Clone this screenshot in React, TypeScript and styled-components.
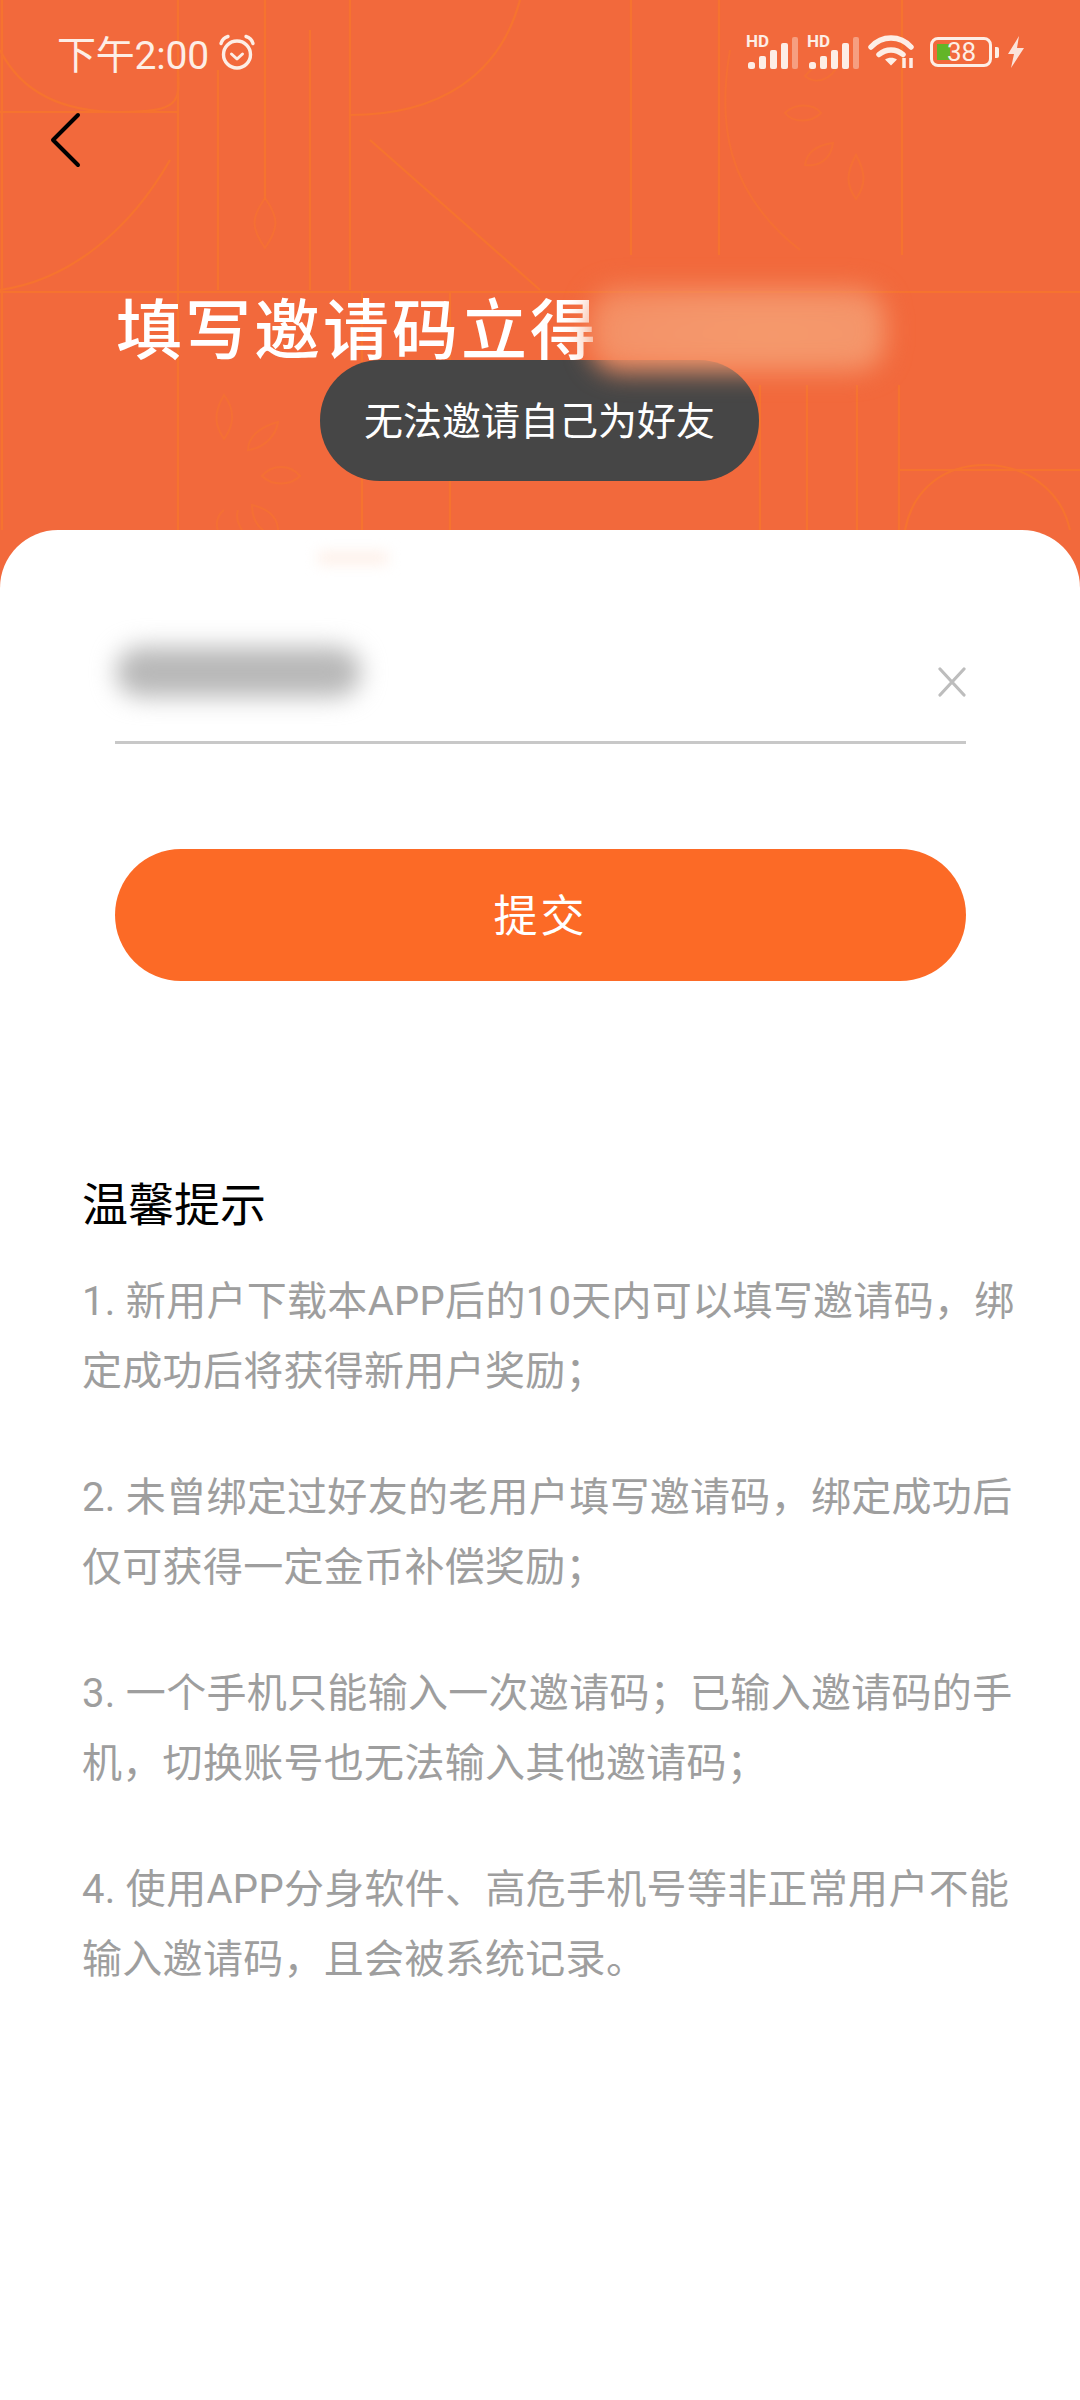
import React from 'react'
import styled, { createGlobalStyle } from 'styled-components'

const GlobalStyle = createGlobalStyle`
  html, body {
    margin: 0;
    padding: 0;
    background: #fff;
  }
  * {
    box-sizing: border-box;
  }
`

const FONT = '"Roboto", "Noto Sans CJK SC", "Noto Sans", sans-serif'

const Page = styled.div`
  position: relative;
  width: 1080px;
  height: 2400px;
  overflow: hidden;
  background: #f2693c;
  font-family: ${FONT};
`

const Pattern = styled.svg`
  position: absolute;
  top: 0;
  left: 0;
`

const Header = styled.header`
  position: relative;
  height: 530px;
  padding: 0 0 0 50px;
`

const StatusBar = styled.div`
  display: flex;
  align-items: center;
  justify-content: space-between;
  height: 104px;
  padding: 0 55px 0 7px;
  color: #fdeee6;
`

const Clock = styled.div`
  display: flex;
  align-items: center;
  gap: 9px;
  font-size: 39px;
  letter-spacing: -0.2px;
`

const StatusIcons = styled.div`
  display: flex;
  align-items: center;
`

const SignalGroup = styled.div`
  position: relative;
  width: 61px;
  height: 34px;
`

const HdLabel = styled.span`
  position: absolute;
  top: -2px;
  left: 0;
  font-size: 17px;
  line-height: 16px;
  font-weight: 700;
  color: #fdeee6;
`

const Battery = styled.div`
  position: relative;
  width: 62px;
  height: 30px;
  margin-left: 14px;
  border: 3px solid #fdeee6;
  border-radius: 8px;
  padding: 4px;
`

const BatteryFill = styled.div`
  width: 13px;
  height: 100%;
  background: #63b527;
`

const BatteryText = styled.span`
  position: absolute;
  top: -3px;
  left: 14px;
  font-size: 26px;
  line-height: 30px;
  color: #fdeee6;
`

const BatteryCap = styled.div`
  width: 4px;
  height: 11px;
  margin: 0 8px 0 3px;
  border-radius: 0 2px 2px 0;
  background: #fdeee6;
`

const BackButton = styled.button`
  display: block;
  width: 40px;
  height: 60px;
  margin: 8px 0 0;
  padding: 0;
  border: 0;
  background: none;
`

const Title = styled.h1`
  margin: 122px 0 0 66px;
  font-size: 66px;
  line-height: 76px;
  font-weight: 500;
  letter-spacing: 3px;
  color: #fff;
  white-space: nowrap;
`

const BlurPatch = styled.div`
  position: absolute;
  top: 288px;
  left: 590px;
  width: 295px;
  height: 84px;
  border-radius: 30px;
  background: radial-gradient(ellipse at 62% 55%, #f59a6c 0%, #f4946a 55%, #f3865a 100%);
  filter: blur(13px);
  z-index: 3;
`

const Toast = styled.div`
  position: absolute;
  top: 360px;
  left: 320px;
  display: flex;
  align-items: center;
  justify-content: center;
  width: 439px;
  height: 121px;
  padding-bottom: 6px;
  border-radius: 60px;
  background: #464646;
  color: #fff;
  font-size: 39px;
  z-index: 2;
`

const Card = styled.main`
  position: relative;
  height: 1870px;
  padding: 0 81px 0 82px;
  border-radius: 58px 58px 0 0;
  background: #fff;
`

const Smudge = styled.div`
  position: absolute;
  top: 22px;
  left: 318px;
  width: 70px;
  height: 12px;
  background: #feefe7;
  filter: blur(7px);
`

const Form = styled.div`
  padding: 0 33px;
`

const InputRow = styled.div`
  position: relative;
  display: flex;
  align-items: center;
  justify-content: flex-end;
  height: 214px;
  padding: 93px 0 0;
  border-bottom: 3px solid #c8c8c8;
`

const BlurredCode = styled.div`
  position: absolute;
  top: 117px;
  left: 1px;
  width: 245px;
  height: 50px;
  border-radius: 25px;
  background: #b8b8b8;
  filter: blur(12px);
`

const ClearButton = styled.button`
  width: 28px;
  height: 30px;
  padding: 0;
  border: 0;
  background: none;
`

const SubmitButton = styled.button`
  display: block;
  width: 100%;
  height: 132px;
  margin-top: 105px;
  padding: 0 0 5px;
  border: 0;
  border-radius: 66px;
  background: #fc6a26;
  color: #fff;
  font-family: ${FONT};
  font-size: 44px;
  letter-spacing: 3px;
`

const TipsTitle = styled.h2`
  margin: 194px 0 0;
  font-size: 46px;
  line-height: 60px;
  font-weight: 400;
  color: #000;
`

const TipsList = styled.div`
  margin-top: 32px;
`

const Tip = styled.p`
  margin: 0 0 56px;
  width: 940px;
  font-size: 40px;
  line-height: 70px;
  letter-spacing: 0.3px;
  color: #9e9e9e;
`

const AlarmIcon = () => (
  <svg width="38" height="38" viewBox="0 0 38 38" fill="none" stroke="#fdeee6" strokeWidth="3.4">
    <circle cx="19" cy="21.5" r="13.5" />
    <path d="M13.5 21l5.5 5 5.500-5" strokeWidth="3" strokeLinecap="round" strokeLinejoin="round" />
    <path d="M3 10.5c1-3.5 3.5-6 7-7M35 10.5c-1-3.500-3.500-6-7-7" strokeLinecap="round" />
  </svg>
)

const SignalIcon = () => (
  <svg width="50" height="32" viewBox="0 0 50 32" style={{ position: 'absolute', left: 2, bottom: 0 }}>
    <rect x="0" y="25" width="7" height="7" rx="2.500" fill="#fdeee6" />
    <rect x="11" y="19" width="7" height="13" rx="2" fill="#fdeee6" />
    <rect x="22" y="13" width="7" height="19" rx="2" fill="#fdeee6" />
    <rect x="33" y="6" width="7" height="26" rx="2" fill="#fdeee6" />
    <rect x="44" y="0" width="6" height="32" rx="2" fill="#fdeee6" opacity="0.4" />
  </svg>
)

const WifiIcon = () => (
  <svg width="48" height="36" viewBox="0 0 48 36" fill="none" stroke="#fdeee6" strokeWidth="5.5" strokeLinecap="round">
    <path d="M3 13C14 1 32 1 43 13" />
    <path d="M11 20.500c7-6 17-6 24 0" />
    <path d="M17 25.500l6 6 6-6c-3.500-2.500-8.500-2.500-12 0z" fill="#fdeee6" stroke="none" />
    <path d="M36 24v10M43 24v10" strokeWidth="3.500" strokeLinecap="butt" />
  </svg>
)

const BoltIcon = () => (
  <svg width="18" height="32" viewBox="0 0 18 32" fill="#fbe3da">
    <path d="M12 0L1 18h6l-3 14L17 12h-7z" />
  </svg>
)

const BackIcon = () => (
  <svg width="40" height="60" viewBox="0 0 40 60" fill="none" stroke="#000" strokeWidth="4" strokeLinecap="round" strokeLinejoin="round">
    <path d="M28 3L3 28L28 53" />
  </svg>
)

const CloseIcon = () => (
  <svg width="28" height="30" viewBox="0 0 28 30" stroke="#bdbdbd" strokeWidth="3.200" strokeLinecap="round">
    <path d="M2 2l24 26M26 2L2 28" />
  </svg>
)

const HeaderPattern = () => (
  <Pattern width="1080" height="530" viewBox="0 0 1080 530" fill="none" stroke="#f6732f" strokeWidth="2.200">
    <path d="M2 0v530M178 0v530M218 70v220M265 0v200M310 30v260M350 0v290M0 112h178M0 292h1080" />
    <path d="M631 0v255M719 0v255M902 0v255M760 385v145M807 385v145M857 385v145M899 385v145M362 292v238M450 292v238" />
    <path d="M900 470h180M905 530c8-42 40-65 80-65s76 24 85 65" />
    <path d="M0 50c20 40 60 62 120 62s60-10 58-42" />
    <path d="M350 115c90 0 150-40 170-115" />
    <path d="M0 290c70-10 130-60 170-130" />
    <path d="M370 140l170 150" />
    <g strokeWidth="2" opacity="0.6">
      <path d="M730 50c-12 70-6 140 70 200" />
      <path d="M265 198c-14 20-14 30 0 50c14-20 14-30 0-50z" />
      <path d="M224 395c-12 20-8 32 0 44c10-14 12-28 0-44z" />
      <path d="M248 450c0-14 14-24 30-28c-2 14-14 26-30 28z" />
      <path d="M262 476c10-12 28-12 38 0c-10 10-28 10-38 0z" />
      <path d="M252 505c18 4 28 14 26 32c-16-4-26-14-26-32z" />
      <path d="M224 510c-8 6-8 16-6 20M238 510c-2 6 0 14 4 20" />
      <path d="M805 76c12-14 24-18 34-18c0 16-20 30-34 18z" />
      <path d="M785 113c10-10 28-10 36 0c-10 10-28 10-36 0z" />
      <path d="M805 165c2-14 12-20 28-22c-2 16-14 24-28 22z" />
      <path d="M856 155c-10 18-10 30 0 44c10-14 10-26 0-44z" />
    </g>
  </Pattern>
)

const TIPS = [
  '1. 新用户下载本APP后的10天内可以填写邀请码，绑定成功后将获得新用户奖励；',
  '2. 未曾绑定过好友的老用户填写邀请码，绑定成功后仅可获得一定金币补偿奖励；',
  '3. 一个手机只能输入一次邀请码；已输入邀请码的手机，切换账号也无法输入其他邀请码；',
  '4. 使用APP分身软件、高危手机号等非正常用户不能输入邀请码，且会被系统记录。',
]

export default function App() {
  return (
    <Page>
      <GlobalStyle />
      <HeaderPattern />
      <Header>
        <StatusBar>
          <Clock>
            下午2:00
            <AlarmIcon />
          </Clock>
          <StatusIcons>
            <SignalGroup>
              <HdLabel>HD</HdLabel>
              <SignalIcon />
            </SignalGroup>
            <SignalGroup>
              <HdLabel>HD</HdLabel>
              <SignalIcon />
            </SignalGroup>
            <WifiIcon />
            <Battery>
              <BatteryFill />
              <BatteryText>38</BatteryText>
            </Battery>
            <BatteryCap />
            <BoltIcon />
          </StatusIcons>
        </StatusBar>
        <BackButton>
          <BackIcon />
        </BackButton>
        <Title>填写邀请码立得</Title>
        <BlurPatch />
      </Header>
      <Toast>无法邀请自己为好友</Toast>
      <Card>
        <Smudge />
        <Form>
          <InputRow>
            <BlurredCode />
            <ClearButton>
              <CloseIcon />
            </ClearButton>
          </InputRow>
          <SubmitButton>提交</SubmitButton>
        </Form>
        <TipsTitle>温馨提示</TipsTitle>
        <TipsList>
          {TIPS.map((tip) => (
            <Tip key={tip}>{tip}</Tip>
          ))}
        </TipsList>
      </Card>
    </Page>
  )
}
